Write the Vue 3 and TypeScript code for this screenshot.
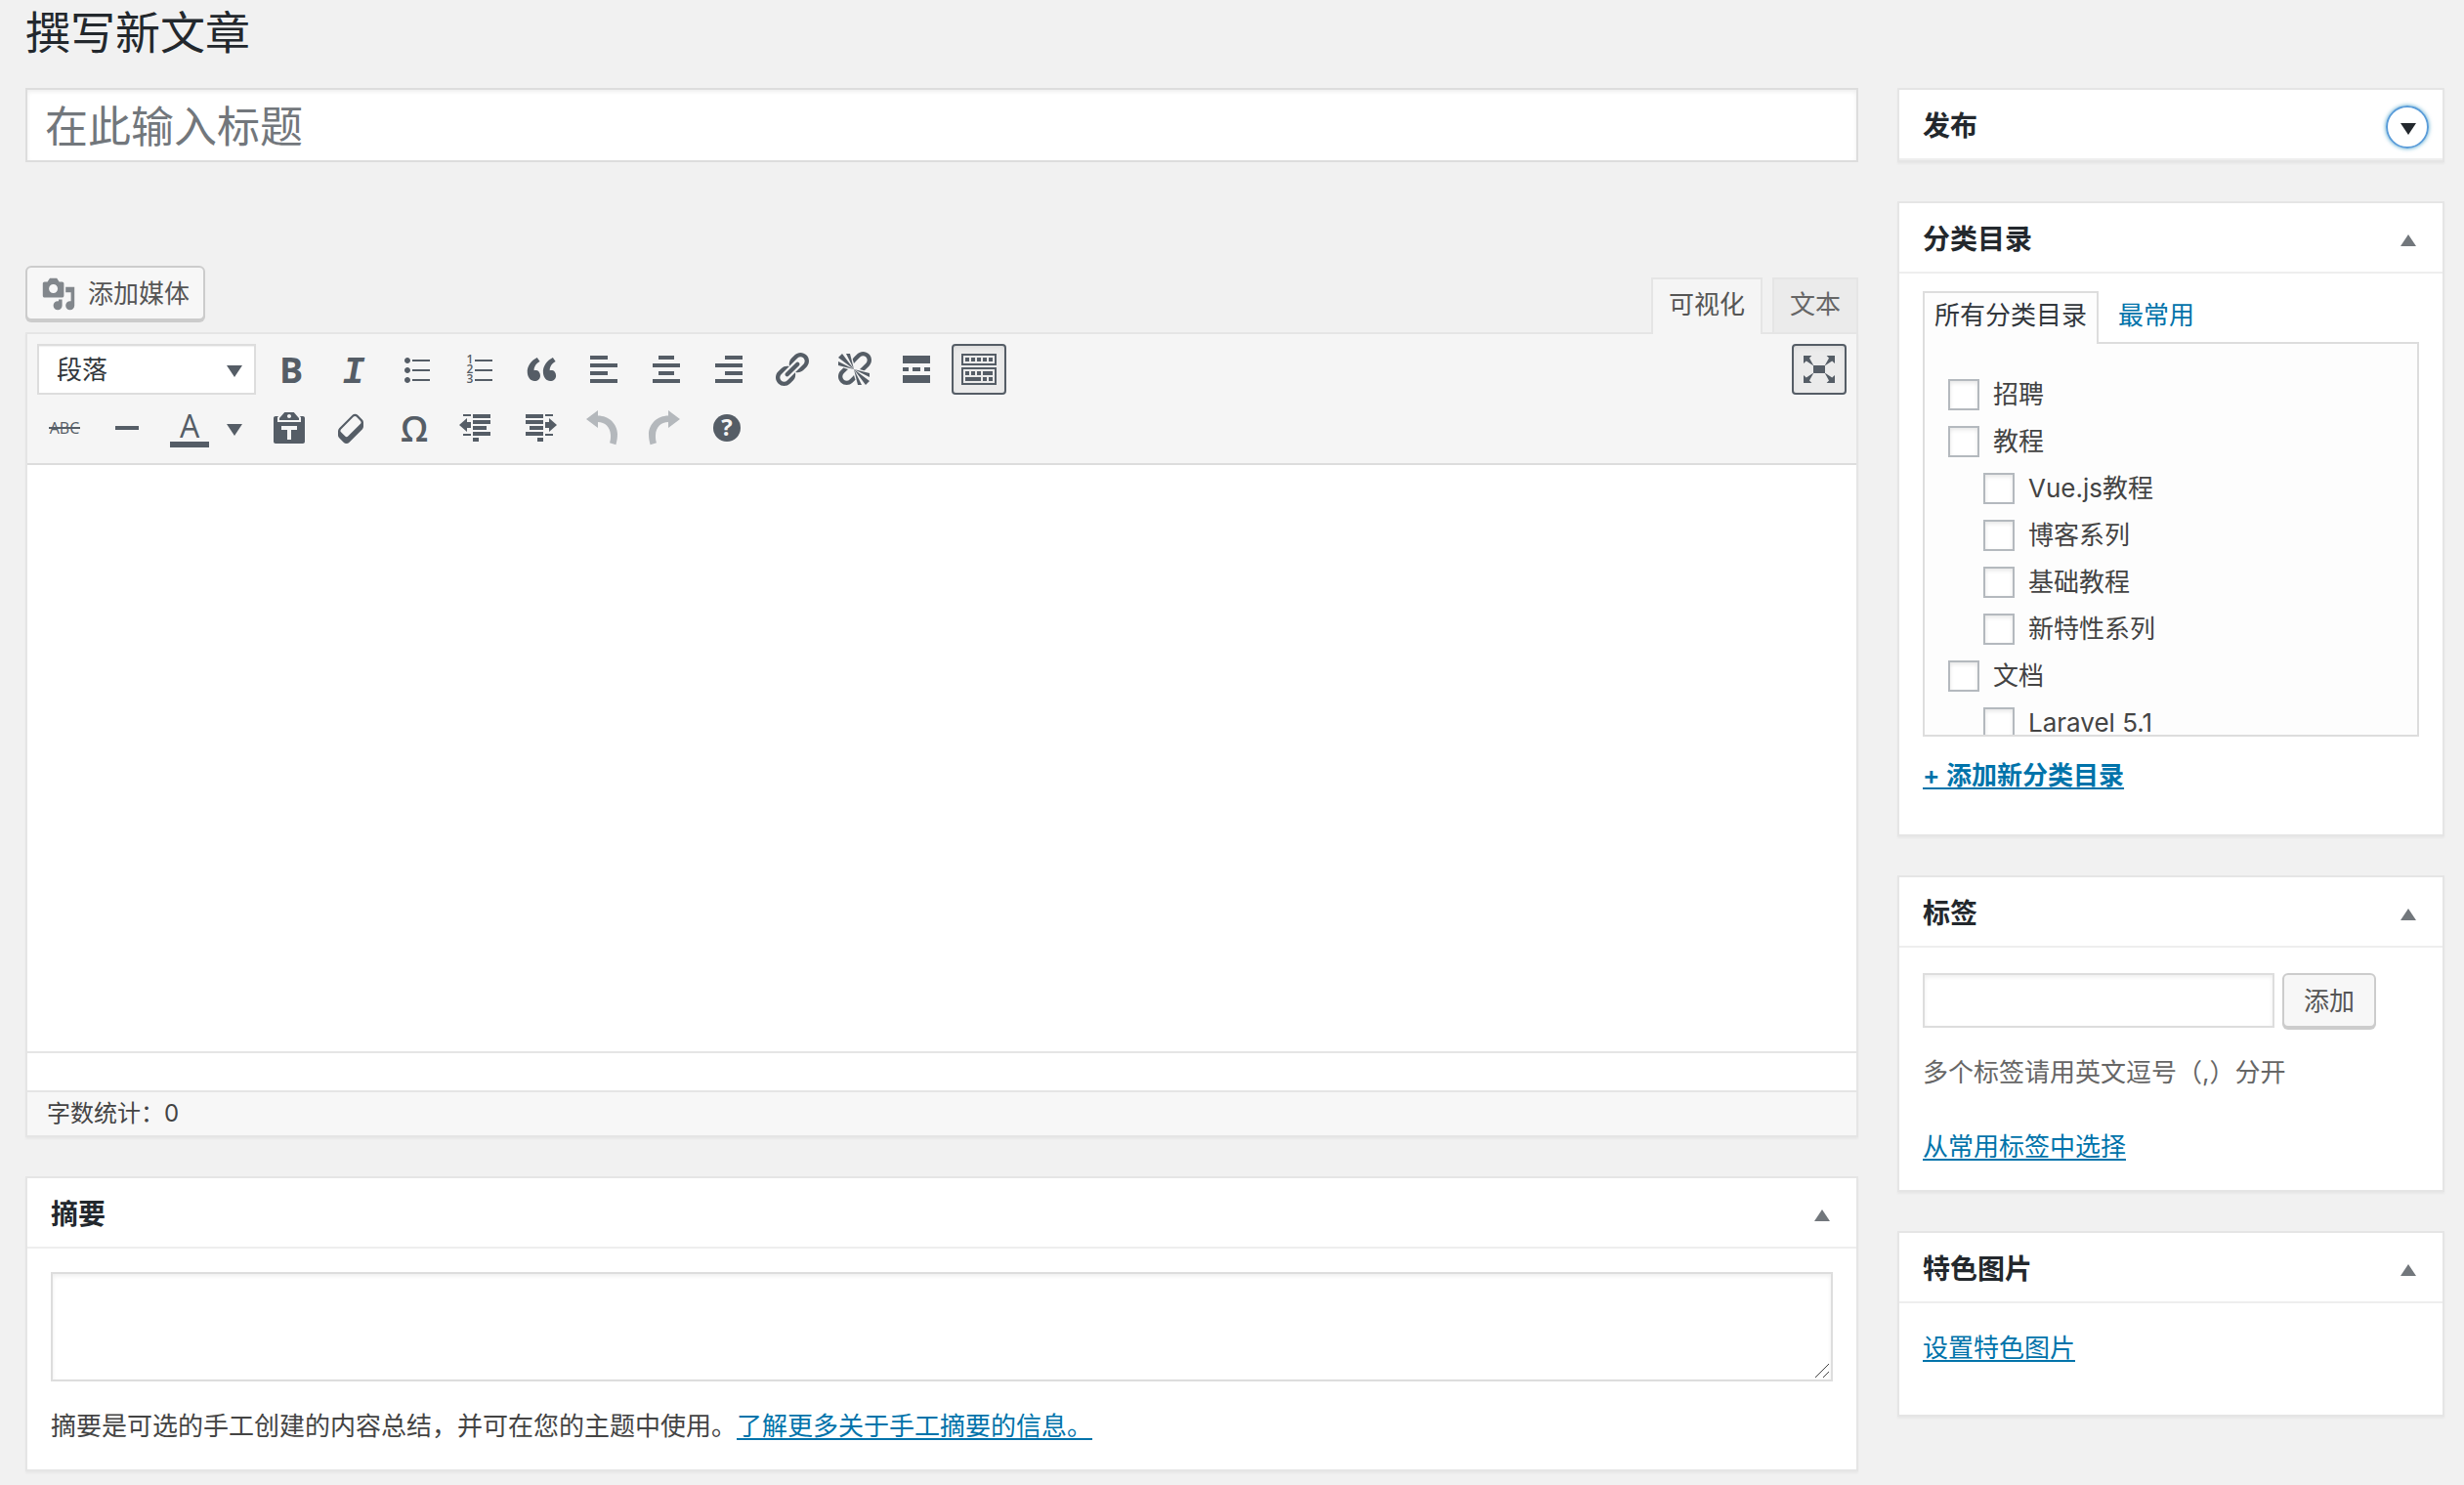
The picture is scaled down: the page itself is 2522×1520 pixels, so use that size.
<script setup lang="ts">
import { reactive, ref } from 'vue'

interface Category {
  name: string
  child: boolean
  checked: boolean
}

interface ToolIcon {
  label: string
  path?: string
  letter?: string
  active?: boolean
  faded?: boolean
  flip?: boolean
}

const title = ref('')
const content = ref('')
const excerpt = ref('')
const newTag = ref('')
const format = ref('p')

const rowOne: ToolIcon[] = [
  { label: '粗体', letter: 'bold' },
  { label: '斜体', letter: 'italic' },
  {
    label: '项目列表',
    path: 'M5.5 7C4.67 7 4 6.33 4 5.5 4 4.68 4.67 4 5.5 4 6.32 4 7 4.68 7 5.5 7 6.33 6.32 7 5.5 7zM8 5h9v1H8V5zm-2.5 7c-.83 0-1.5-.67-1.5-1.5C4 9.68 4.67 9 5.5 9c.82 0 1.5.68 1.5 1.5 0 .83-.68 1.5-1.5 1.5zM8 10h9v1H8v-1zm-2.5 7c-.83 0-1.5-.67-1.5-1.5 0-.82.67-1.5 1.5-1.5.82 0 1.5.68 1.5 1.5 0 .83-.68 1.5-1.5 1.5zM8 15h9v1H8v-1z',
  },
  { label: '编号列表', letter: 'numbers', path: 'M8 5h9v1H8zM8 10h9v1H8zM8 15h9v1H8z' },
  {
    label: '段落引用',
    path: 'M9.49 13.22c0-.74-.2-1.38-.61-1.9-.62-.78-1.83-.88-2.53-.72-.29-1.65 1.11-3.75 2.92-4.65L7.88 4c-2.73 1.3-5.42 4.28-4.96 8.05C3.21 14.43 4.59 16 6.54 16c.85 0 1.56-.25 2.12-.75s.83-1.18.83-2.03zm8.05 0c0-.74-.2-1.38-.61-1.9-.63-.78-1.83-.88-2.53-.72-.29-1.65 1.11-3.75 2.92-4.65L15.93 4c-2.73 1.3-5.41 4.28-4.95 8.05.29 2.38 1.66 3.95 3.61 3.95.85 0 1.56-.25 2.12-.75s.83-1.18.83-2.03z',
  },
  { label: '左对齐', path: 'M12 5V3H3v2h9zm5 4V7H3v2h14zm-5 4v-2H3v2h9zm5 4v-2H3v2h14z' },
  { label: '居中对齐', path: 'M14 5V3H6v2h8zm3 4V7H3v2h14zm-3 4v-2H6v2h8zm3 4v-2H3v2h14z' },
  { label: '右对齐', path: 'M17 5V3H8v2h9zm0 4V7H3v2h14zm0 4v-2H8v2h9zm0 4v-2H3v2h14z' },
  {
    label: '插入链接',
    path: 'M17.74 2.76c1.68 1.69 1.68 4.41 0 6.1l-1.53 1.52c-1.12 1.12-2.7 1.47-4.14 1.09l2.62-2.61.76-.77.76-.76c.84-.84.84-2.2 0-3.04-.84-.85-2.2-.85-3.04 0l-.77.76-3.38 3.38c-.37-1.44-.02-3.02 1.1-4.14l1.52-1.53c1.69-1.68 4.42-1.68 6.1 0zM8.59 13.43l5.34-5.34c.42-.42.42-1.1 0-1.52-.44-.43-1.13-.39-1.53 0l-5.33 5.34c-.42.42-.42 1.1 0 1.52.44.43 1.13.39 1.52 0zm-.76 2.29l4.14-4.15c.38 1.44.03 3.02-1.09 4.14l-1.52 1.53c-1.69 1.68-4.41 1.68-6.1 0-1.68-1.68-1.68-4.42 0-6.1l1.53-1.52c1.12-1.12 2.7-1.47 4.14-1.1l-4.14 4.15c-.85.84-.85 2.2 0 3.05.84.84 2.2.84 3.04 0z',
  },
  {
    label: '移除链接',
    path: 'M17.74 2.26c1.68 1.69 1.68 4.41 0 6.1l-1.53 1.52c-.32.33-.69.58-1.08.77L13 10l1.69-1.64.76-.77.76-.76c.84-.84.84-2.2 0-3.04-.84-.85-2.2-.85-3.04 0l-.77.76-.76.76L10 7l-.65-2.14c.19-.38.44-.75.77-1.07l1.52-1.53c1.69-1.68 4.42-1.68 6.1 0zM2 4l8 6-6-8zm4-2l4 8-2-8H6zM2 6l8 4-8-2V6zm7.36 7.69L10 13l.74 2.35-1.38 1.39c-1.69 1.68-4.41 1.68-6.1 0-1.68-1.68-1.68-4.42 0-6.1l1.39-1.38L7 10l-.69.64-1.52 1.53c-.85.84-.85 2.2 0 3.04.84.85 2.2.85 3.04 0zM18 16l-8-6 6 8zm-4 2l-4-8 2 8h2zm4-4l-8-4 8 2v2z',
  },
  { label: '插入 More 标签', path: 'M17 7V3H3v4h14zM6 11V9H3v2h3zm6 0V9H8v2h4zm5 0V9h-3v2h3zm0 6v-4H3v4h14z' },
  {
    label: '工具栏切换',
    active: true,
    path: 'M19 2v6H1V2h18zm-1 5V3H2v4h16zM5 4v2H3V4h2zm3 0v2H6V4h2zm3 0v2H9V4h2zm3 0v2h-2V4h2zm3 0v2h-2V4h2zm2 5v9H1V9h18zm-1 8v-7H2v7h16zM5 11v2H3v-2h2zm3 0v2H6v-2h2zm3 0v2H9v-2h2zm6 0v2h-5v-2h5zm-6 3v2H3v-2h8zm3 0v2h-2v-2h2zm3 0v2h-2v-2h2z',
  },
]

const undoPath =
  'M8 1v2.7c5.6 0 10 4.2 10 9.6 0 1.9-.3 3.6-.8 5.3l-3.2-1c.4-1.2.6-2.6.5-4C14.3 9.5 11.6 7 8 7v3L2 5.5z'

const rowTwo: ToolIcon[] = [
  {
    label: '粘贴为文本',
    path: 'M12.38 2L15 5v1H5V5l2.64-3h4.74zM10 5c.55 0 1-.44 1-1 0-.55-.45-1-1-1s-1 .45-1 1c0 .56.45 1 1 1zm5.45-1H17c.55 0 1 .45 1 1v12c0 .56-.45 1-1 1H3c-.55 0-1-.44-1-1V5c0-.55.45-1 1-1h1.55L4 4.63V7h12V4.63zM14 11V9H6v2h3v5h2v-5h3z',
  },
  {
    label: '清除格式',
    path: 'M14.29 4.59l1.1 1.11c.41.4.61.94.61 1.47v2.12c0 .53-.2 1.07-.61 1.47l-6.63 6.63c-.4.41-.94.61-1.47.61s-1.07-.2-1.47-.61l-1.11-1.1-1.1-1.11c-.41-.4-.61-.94-.61-1.47v-2.12c0-.54.2-1.07.61-1.48l6.63-6.62c.4-.41.94-.61 1.47-.61s1.06.2 1.47.61zm-6.21 9.7l6.42-6.42c.39-.39.39-1.03 0-1.43L12.36 4.3c-.19-.19-.45-.29-.72-.29s-.52.1-.71.29l-6.42 6.42c-.39.4-.39 1.04 0 1.43l2.14 2.14c.38.38 1.04.38 1.43 0z',
  },
  { label: '特殊字符', letter: 'omega' },
  {
    label: '减少缩进量',
    path: 'M8 3h9v2H8zM8 6h9v2H8zM8 9h7v2H8zM8 12h9v2H8zM8 15h3v2H8zM3 3h4v1H3zM3 13h4v1H3zM1 8.5L5 5v2h2v3H5v2z',
  },
  {
    label: '增加缩进量',
    path: 'M3 3h9v2H3zM3 6h9v2H3zM5 9h7v2H5zM3 12h9v2H3zM9 15h3v2H9zM13 3h4v1h-4zM13 13h4v1h-4zM19 8.5L15 5v2h-2v3h2v2z',
  },
  { label: '撤销', path: undoPath, faded: true },
  { label: '重做', path: undoPath, faded: true, flip: true },
  { label: '键盘快捷键', letter: 'help' },
]

const categories = reactive<Category[]>([
  { name: '招聘', child: false, checked: false },
  { name: '教程', child: false, checked: false },
  { name: 'Vue.js教程', child: true, checked: false },
  { name: '博客系列', child: true, checked: false },
  { name: '基础教程', child: true, checked: false },
  { name: '新特性系列', child: true, checked: false },
  { name: '文档', child: false, checked: false },
  { name: 'Laravel 5.1', child: true, checked: false },
])
</script>

<template>
  <div class="page">
    <h1>撰写新文章</h1>
    <div class="columns">
      <main>
        <input v-model="title" class="title field" type="text" placeholder="在此输入标题" aria-label="标题" />

        <div class="tools">
          <button type="button" class="button media">
            <svg viewBox="0 0 20 20" width="36" height="36" aria-hidden="true">
              <path
                d="M13 11V4c0-.55-.45-1-1-1h-1.67L9 1H5L3.67 3H2c-.55 0-1 .45-1 1v7c0 .55.45 1 1 1h10c.55 0 1-.45 1-1zM7 4.5c1.38 0 2.5 1.12 2.5 2.5S8.38 9.5 7 9.5 4.5 8.38 4.5 7 5.62 4.5 7 4.5zM14 6h5v10.5c0 1.38-1.12 2.5-2.5 2.5S14 17.88 14 16.5s1.12-2.5 2.5-2.5c.17 0 .34.02.5.05V9h-3V6zm-4 8.05V13h2v3.5c0 1.38-1.12 2.5-2.5 2.5S7 17.88 7 16.5 8.12 14 9.5 14c.17 0 .34.02.5.05z"
              />
            </svg>
            <span>添加媒体</span>
          </button>
          <div class="modes">
            <button type="button" class="mode current">可视化</button>
            <button type="button" class="mode">文本</button>
          </div>
        </div>

        <section class="editor">
          <div class="toolbar">
            <div class="bar">
              <div class="format">
                <select v-model="format" aria-label="段落格式">
                  <option value="p">段落</option>
                  <option value="h1">标题1</option>
                  <option value="h2">标题2</option>
                </select>
                <svg viewBox="0 0 16 12" width="16" height="12" aria-hidden="true"><path d="M0 0h16L8 12z" /></svg>
              </div>
              <button
                v-for="icon in rowOne"
                :key="icon.label"
                type="button"
                class="tool"
                :class="{ active: icon.active }"
                :aria-label="icon.label"
              >
                <svg viewBox="0 0 20 20" width="40" height="40" aria-hidden="true">
                  <path v-if="icon.path" :d="icon.path" />
                  <text v-if="icon.letter === 'bold'" class="g-bold" x="10" y="17">B</text>
                  <text v-if="icon.letter === 'italic'" class="g-italic" x="10" y="17">I</text>
                  <text v-if="icon.letter === 'numbers'" class="g-number">
                    <tspan x="5.5" y="7">1</tspan>
                    <tspan x="5.5" y="12">2</tspan>
                    <tspan x="5.5" y="17">3</tspan>
                  </text>
                </svg>
              </button>
              <button type="button" class="tool active fullscreen" aria-label="免打扰写作模式">
                <svg viewBox="0 0 20 20" width="40" height="40" aria-hidden="true">
                  <path
                    d="M7 8h6v4H7zM2 3h4.200L5 4.300 7.200 8.200 3.400 5.800 2 7zM18 3h-4.200L15 4.300 12.800 8.200 16.600 5.800 18 7zM2 17h4.200L5 15.700 7.200 11.800 3.400 14.200 2 13zM18 17h-4.200L15 15.700 12.800 11.800 16.600 14.200 18 13z"
                  />
                </svg>
              </button>
            </div>
            <div class="bar">
              <button type="button" class="tool" aria-label="删除线">
                <svg viewBox="0 0 20 20" width="40" height="40" aria-hidden="true">
                  <text class="g-strike" x="10" y="13">ABC</text>
                  <path d="M2 9.500h16v1H2z" />
                </svg>
              </button>
              <button type="button" class="tool" aria-label="水平线">
                <svg viewBox="0 0 20 20" width="40" height="40" aria-hidden="true"><path d="M4 9h12v2H4z" /></svg>
              </button>
              <div class="split">
                <button type="button" class="tool" aria-label="文字颜色">
                  <svg viewBox="0 0 20 20" width="40" height="40" aria-hidden="true">
                    <text class="g-color" x="10" y="15">A</text>
                    <path d="M0 17h20v3H0z" />
                  </svg>
                </button>
                <button type="button" class="open" aria-label="选择文字颜色">
                  <svg viewBox="0 0 16 12" width="16" height="12" aria-hidden="true"><path d="M0 0h16L8 12z" /></svg>
                </button>
              </div>
              <button
                v-for="icon in rowTwo"
                :key="icon.label"
                type="button"
                class="tool"
                :class="{ faded: icon.faded }"
                :aria-label="icon.label"
              >
                <svg viewBox="0 0 20 20" width="40" height="40" aria-hidden="true">
                  <path v-if="icon.path" :d="icon.path" :transform="icon.flip ? 'matrix(-1 0 0 1 20 0)' : undefined" />
                  <text v-if="icon.letter === 'omega'" class="g-omega" x="10" y="17">Ω</text>
                  <g v-if="icon.letter === 'help'">
                    <circle cx="10" cy="10" r="7" />
                    <text class="g-help" x="10" y="14">?</text>
                  </g>
                </svg>
              </button>
            </div>
          </div>
          <textarea v-model="content" class="content" aria-label="正文"></textarea>
          <div class="path"></div>
          <div class="status">字数统计：{{ content.length }}</div>
        </section>

        <section class="box">
          <header>
            <h2>摘要</h2>
            <button type="button" class="toggle" aria-label="切换面板：摘要">
              <svg viewBox="0 0 20 20" width="20" height="20" aria-hidden="true"><path d="M3 16L11 4l8 12z" /></svg>
            </button>
          </header>
          <div class="inside excerpt">
            <div class="resizable">
              <textarea v-model="excerpt" class="field" aria-label="摘要"></textarea>
              <svg viewBox="0 0 16 16" width="16" height="16" aria-hidden="true">
                <path d="M1 15L15 1M9 15l6-6" />
              </svg>
            </div>
            <p>摘要是可选的手工创建的内容总结，并可在您的主题中使用。<a href="#">了解更多关于手工摘要的信息。</a></p>
          </div>
        </section>
      </main>

      <aside>
        <section class="box">
          <header>
            <h2>发布</h2>
            <button type="button" class="toggle focused" aria-label="切换面板：发布">
              <svg viewBox="0 0 20 20" width="20" height="20" aria-hidden="true"><path d="M3 6h16l-8 12z" /></svg>
            </button>
          </header>
        </section>

        <section class="box">
          <header>
            <h2>分类目录</h2>
            <button type="button" class="toggle" aria-label="切换面板：分类目录">
              <svg viewBox="0 0 20 20" width="20" height="20" aria-hidden="true"><path d="M3 16L11 4l8 12z" /></svg>
            </button>
          </header>
          <div class="inside categories">
            <nav>
              <a href="#" class="here">所有分类目录</a>
              <a href="#">最常用</a>
            </nav>
            <div class="panel">
              <label v-for="cat in categories" :key="cat.name" :class="{ child: cat.child }">
                <input v-model="cat.checked" type="checkbox" />
                <span>{{ cat.name }}</span>
              </label>
            </div>
            <a href="#" class="add">+ 添加新分类目录</a>
          </div>
        </section>

        <section class="box">
          <header>
            <h2>标签</h2>
            <button type="button" class="toggle" aria-label="切换面板：标签">
              <svg viewBox="0 0 20 20" width="20" height="20" aria-hidden="true"><path d="M3 16L11 4l8 12z" /></svg>
            </button>
          </header>
          <div class="inside tags">
            <div class="row">
              <input v-model="newTag" class="field" type="text" aria-label="添加新标签" />
              <button type="button" class="button">添加</button>
            </div>
            <p>多个标签请用英文逗号（,）分开</p>
            <a href="#">从常用标签中选择</a>
          </div>
        </section>

        <section class="box">
          <header>
            <h2>特色图片</h2>
            <button type="button" class="toggle" aria-label="切换面板：特色图片">
              <svg viewBox="0 0 20 20" width="20" height="20" aria-hidden="true"><path d="M3 16L11 4l8 12z" /></svg>
            </button>
          </header>
          <div class="inside thumbnail">
            <a href="#">设置特色图片</a>
          </div>
        </section>
      </aside>
    </div>
  </div>
</template>

<style>
body {
  margin: 0;
  background: #f1f1f1;
}
</style>

<style scoped>
.page {
  box-sizing: border-box;
  padding: 0 20px 14px 26px;
  color: #444;
  font-family: Inter, "Noto Sans CJK SC", sans-serif;
  font-size: 26px;
  line-height: 36px;
}

.page *,
.page *::before {
  box-sizing: border-box;
}

h1,
h2,
p {
  margin: 0;
}

h1 {
  margin-bottom: 24px;
  color: #23282d;
  font-size: 46px;
  font-weight: 400;
  line-height: 66px;
}

.columns {
  display: grid;
  grid-template-columns: minmax(0, 1fr) 560px;
  gap: 40px;
  align-items: start;
}

aside {
  display: flex;
  flex-direction: column;
  gap: 40px;
}

button,
input,
select,
textarea {
  margin: 0;
  font: inherit;
  color: inherit;
}

button {
  padding: 0;
  border: 0;
  background: none;
}

svg {
  display: block;
  flex: none;
  fill: currentColor;
  overflow: visible;
}

a {
  color: #0073aa;
  text-decoration: underline;
  text-decoration-thickness: 2px;
  text-decoration-skip-ink: none;
  text-underline-offset: 3px;
}

.field {
  border: 2px solid #ddd;
  border-radius: 0;
  background: #fff;
  box-shadow: inset 0 2px 4px rgba(0, 0, 0, 0.07);
  color: #32373c;
  outline: none;
}

.title {
  display: block;
  width: 100%;
  height: 76px;
  padding: 4px 18px 0;
  font-size: 44px;
}

.title::placeholder {
  color: #72777c;
  opacity: 1;
}

.tools {
  display: flex;
  justify-content: space-between;
  align-items: flex-start;
  height: 68px;
  margin-top: 106px;
}

.button {
  height: 56px;
  padding: 2px 20px 0;
  border: 2px solid #ccc;
  border-radius: 6px;
  background: #f7f7f7;
  box-shadow: 0 2px 0 #ccc;
  color: #555;
}

.media {
  display: flex;
  align-items: center;
  gap: 12px;
  padding: 2px 14px 0;
}

.media svg {
  color: #82878c;
}

.modes {
  display: flex;
  gap: 10px;
  margin-top: 12px;
}

.mode {
  height: 56px;
  padding: 0 16px 2px;
  border: 2px solid #e5e5e5;
  border-bottom: 0;
  background: #ebebeb;
  color: #666;
}

.mode.current {
  position: relative;
  height: 58px;
  padding-bottom: 4px;
  background: #f5f5f5;
  color: #555;
}

.editor {
  border: 2px solid #e5e5e5;
  box-shadow: 0 2px 2px rgba(0, 0, 0, 0.04);
}

.toolbar {
  display: flex;
  flex-direction: column;
  gap: 8px;
  padding: 10px;
  border-bottom: 2px solid #ddd;
  background: #f5f5f5;
  color: #555d66;
}

.bar {
  display: flex;
  gap: 8px;
  height: 52px;
}

.format {
  display: grid;
  width: 224px;
  align-items: center;
}

.format > * {
  grid-area: 1 / 1;
}

.format select {
  width: 100%;
  height: 52px;
  padding: 2px 18px 0;
  border: 2px solid #ddd;
  border-radius: 0;
  background: #fff;
  box-shadow: inset 0 2px 2px -2px rgba(0, 0, 0, 0.2);
  color: #32373c;
  appearance: none;
}

.format svg {
  justify-self: end;
  margin-top: 4px;
  margin-right: 14px;
  pointer-events: none;
}

.tool {
  display: flex;
  justify-content: center;
  align-items: center;
  width: 56px;
  height: 52px;
  border: 2px solid transparent;
  border-radius: 4px;
}

.tool.active {
  border-color: #555d66;
  background: #ebebeb;
  box-shadow: inset 0 2px 10px -6px rgba(0, 0, 0, 0.3);
}

.tool.faded {
  color: #b4b8bc;
}

.fullscreen {
  margin-left: auto;
}

.split {
  display: flex;
  width: 94px;
}

.open {
  display: flex;
  flex: 1;
  justify-content: center;
  align-items: center;
  padding: 4px 2px 0 0;
}

.tool text {
  font-family: "Open Sans", "Noto Sans", sans-serif;
  text-anchor: middle;
}

.tool .g-bold {
  font-size: 18px;
  font-weight: 700;
}

.tool .g-italic {
  font-family: "Liberation Mono", monospace;
  font-size: 19px;
  font-style: italic;
  font-weight: 700;
}

.tool .g-number {
  font-size: 6px;
  font-weight: 600;
}

.tool .g-strike {
  font-size: 8px;
}

.tool .g-color {
  font-size: 16px;
  font-weight: 500;
}

.tool .g-omega {
  font-size: 18px;
  font-weight: 600;
}

.tool .g-help {
  fill: #f5f5f5;
  font-size: 12px;
  font-weight: 700;
}

.content {
  display: block;
  width: 100%;
  height: 600px;
  padding: 20px;
  border: 0;
  background: #fff;
  outline: none;
  resize: none;
}

.path {
  height: 42px;
  border: solid #e5e5e5;
  border-width: 2px 0;
  background: #fff;
}

.status {
  padding: 4px 20px;
  background: #f7f7f7;
  font-size: 24px;
}

.box {
  border: 2px solid #e5e5e5;
  background: #fff;
  box-shadow: 0 2px 2px rgba(0, 0, 0, 0.04);
}

main .box {
  margin-top: 40px;
}

.box header {
  display: flex;
  justify-content: space-between;
  align-items: center;
  height: 72px;
  padding: 4px 14px 0 24px;
  border-bottom: 2px solid #eee;
}

h2 {
  color: #23282d;
  font-size: 28px;
  font-weight: 600;
}

.toggle {
  display: flex;
  justify-content: center;
  align-items: center;
  width: 44px;
  height: 44px;
  margin-top: 2px;
  border-radius: 50%;
  color: #72777c;
}

.toggle.focused {
  border: 2px solid #5b9dd9;
  box-shadow: 0 0 4px rgba(30, 140, 190, 0.8);
  color: #23282d;
}

.inside {
  padding: 0 24px;
}

.excerpt {
  padding-top: 24px;
  padding-bottom: 26px;
}

.resizable {
  display: grid;
}

.resizable > * {
  grid-area: 1 / 1;
}

.resizable svg {
  align-self: end;
  justify-self: end;
  margin: 0 3px 3px 0;
  fill: none;
  stroke: #444;
  stroke-width: 1;
  pointer-events: none;
}

.excerpt textarea {
  width: 100%;
  height: 112px;
  padding: 4px 12px;
  resize: vertical;
}

.excerpt textarea::-webkit-resizer {
  background: transparent;
}

.excerpt p {
  margin-top: 28px;
}

.categories {
  padding-top: 18px;
  padding-bottom: 42px;
}

nav {
  display: flex;
}

nav a {
  height: 52px;
  padding: 0 20px;
  line-height: 50px;
  text-decoration: none;
}

nav .here {
  position: relative;
  height: 54px;
  margin-bottom: -2px;
  padding: 0 10px;
  border: 2px solid #ddd;
  border-bottom: 0;
  background: #fdfdfd;
  color: #32373c;
  line-height: 46px;
}

.panel {
  height: 404px;
  padding: 28px 24px;
  border: 2px solid #ddd;
  background: #fdfdfd;
  overflow: hidden;
}

.panel label {
  display: flex;
  align-items: center;
  gap: 14px;
  height: 48px;
}

.panel .child {
  padding-left: 36px;
}

.panel input {
  flex: none;
  width: 32px;
  height: 32px;
  border: 2px solid #b4b9be;
  background: #fff;
  box-shadow: inset 0 2px 4px rgba(0, 0, 0, 0.1);
  appearance: none;
}

.panel input:checked {
  background: #1e8cbe;
}

.add {
  display: block;
  width: max-content;
  margin-top: 22px;
  font-weight: 600;
}

.tags {
  padding-top: 26px;
  padding-bottom: 26px;
}

.row {
  display: flex;
  gap: 8px;
}

.row input {
  width: 360px;
  height: 56px;
  padding: 0 10px;
}

.tags p {
  margin: 28px 0 40px;
  color: #666;
}

.tags a,
.thumbnail a {
  display: block;
  width: max-content;
}

.thumbnail {
  padding-top: 28px;
  padding-bottom: 50px;
}
</style>
